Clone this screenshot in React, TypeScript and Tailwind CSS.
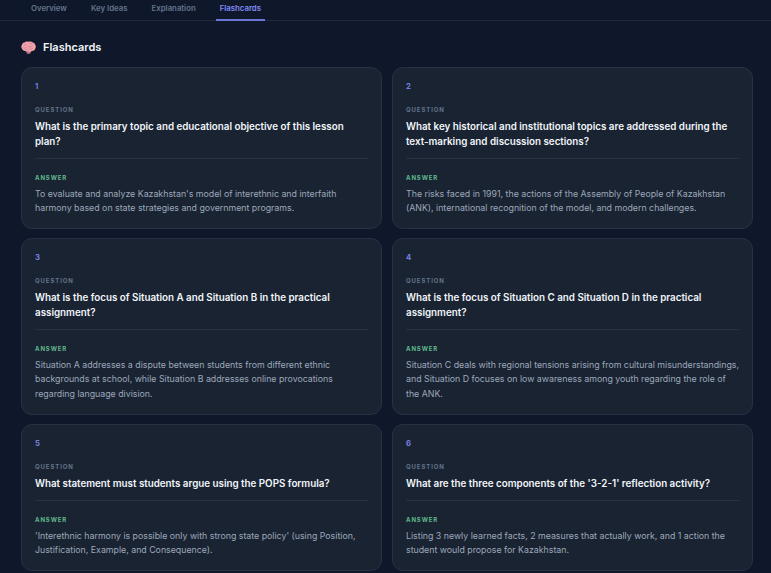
const tabs = ['Overview', 'Key Ideas', 'Explanation', 'Flashcards'];

const cards = [
  {
    q: 'What is the primary topic and educational objective of this lesson plan?',
    a: "To evaluate and analyze Kazakhstan's model of interethnic and interfaith harmony based on state strategies and government programs.",
  },
  {
    q: 'What key historical and institutional topics are addressed during the text-marking and discussion sections?',
    a: 'The risks faced in 1991, the actions of the Assembly of People of Kazakhstan (ANK), international recognition of the model, and modern challenges.',
  },
  {
    q: 'What is the focus of Situation A and Situation B in the practical assignment?',
    a: 'Situation A addresses a dispute between students from different ethnic backgrounds at school, while Situation B addresses online provocations regarding language division.',
  },
  {
    q: 'What is the focus of Situation C and Situation D in the practical assignment?',
    a: 'Situation C deals with regional tensions arising from cultural misunderstandings, and Situation D focuses on low awareness among youth regarding the role of the ANK.',
  },
  {
    q: 'What statement must students argue using the POPS formula?',
    a: "'Interethnic harmony is possible only with strong state policy' (using Position, Justification, Example, and Consequence).",
  },
  {
    q: "What are the three components of the '3-2-1' reflection activity?",
    a: 'Listing 3 newly learned facts, 2 measures that actually work, and 1 action the student would propose for Kazakhstan.',
  },
];

const BrainIcon = () => (
  <svg width="15" height="13" viewBox="0 0 16 14" className="shrink-0">
    <path d="M5.5 11.5 L6.5 13.6 L9.8 13.6 L10.4 11.5 Z" fill="#c9737f" />
    <path
      d="M8 .8C6.4.2 4.6.5 3.6 1.6 2 1.8.9 3 .9 4.4.1 5.4 0 7 .9 8.1c.4 1.6 2 2.7 3.7 2.6 1 .9 2.3 1.2 3.4.8 1.3.5 2.8.2 3.8-.8 1.7.1 3.2-1 3.5-2.6.9-1.1.8-2.7-.1-3.7 0-1.4-1-2.6-2.6-2.8C11.6.5 9.6.2 8 .8Z"
      fill="#efa3ad"
    />
    <path
      d="M3.2 4.4c1.2-.8 2.4-.6 3.2.2M9 2.6c1.2-.4 2.4 0 3 1M2.6 7.4c1.2.6 2.4.4 3.2-.4M7.6 5.8c1.2.8 2.8.8 4 0M9.2 8.6c1 .6 2 .6 3 0M5 9.2c.8.4 1.6.4 2.4 0"
      fill="none"
      stroke="#cf7683"
      strokeWidth=".8"
      strokeLinecap="round"
    />
  </svg>
);

export default function App() {
  return (
    <div className="h-[573px] w-[771px] overflow-hidden bg-[#0f172a] font-['Inter',sans-serif]">
      <div className="flex h-[21px] gap-[17px] border-b border-[#1e293b] pl-[27.5px]">
        {tabs.map((tab) => (
          <div
            key={tab}
            className={
              tab === 'Flashcards'
                ? 'h-[21px] border-b-2 border-[#6d75d6] px-[3.5px] pt-[1.5px] text-[7.8px] leading-[12px] font-semibold text-[#818cf8]'
                : 'h-[21px] px-[3.5px] pt-[1.5px] text-[7.8px] leading-[12px] font-semibold text-[#64748b]'
            }
          >
            {tab}
          </div>
        ))}
      </div>

      <div className="pt-[19px] pr-[18px] pl-[21px]">
        <div className="flex h-[14px] items-center gap-[7px]">
          <BrainIcon />
          <h2 className="text-[11px] leading-[14px] font-semibold text-[#f1f5f9]">Flashcards</h2>
        </div>

        <div className="mt-[13px] grid grid-cols-2 gap-x-[10px] gap-y-[9px]">
          {cards.map((card, i) => (
            <div key={i} className="rounded-[11px] border border-[#263244] bg-[#1a2332] px-[13px] pt-[13px] pb-[12.5px]">
              <div className="text-[7.7px] leading-[11px] font-bold text-[#7680e0]">{i + 1}</div>
              <div className="mt-[13px] text-[6px] leading-[9px] font-bold tracking-[0.9px] text-[#64748b]">QUESTION</div>
              <div className="mt-[6px] text-[9.8px] leading-[14.5px] font-semibold text-[#f1f5f9]">{card.q}</div>
              <div className="mt-[9px] border-t border-[#263244] pt-[14px]">
                <div className="text-[6px] leading-[9px] font-bold tracking-[0.9px] text-[#5fb98c]">ANSWER</div>
                <div className="mt-[4.5px] text-[8.8px] leading-[14.5px] text-[#9ca8ba]">{card.a}</div>
              </div>
            </div>
          ))}
        </div>
      </div>
    </div>
  );
}
